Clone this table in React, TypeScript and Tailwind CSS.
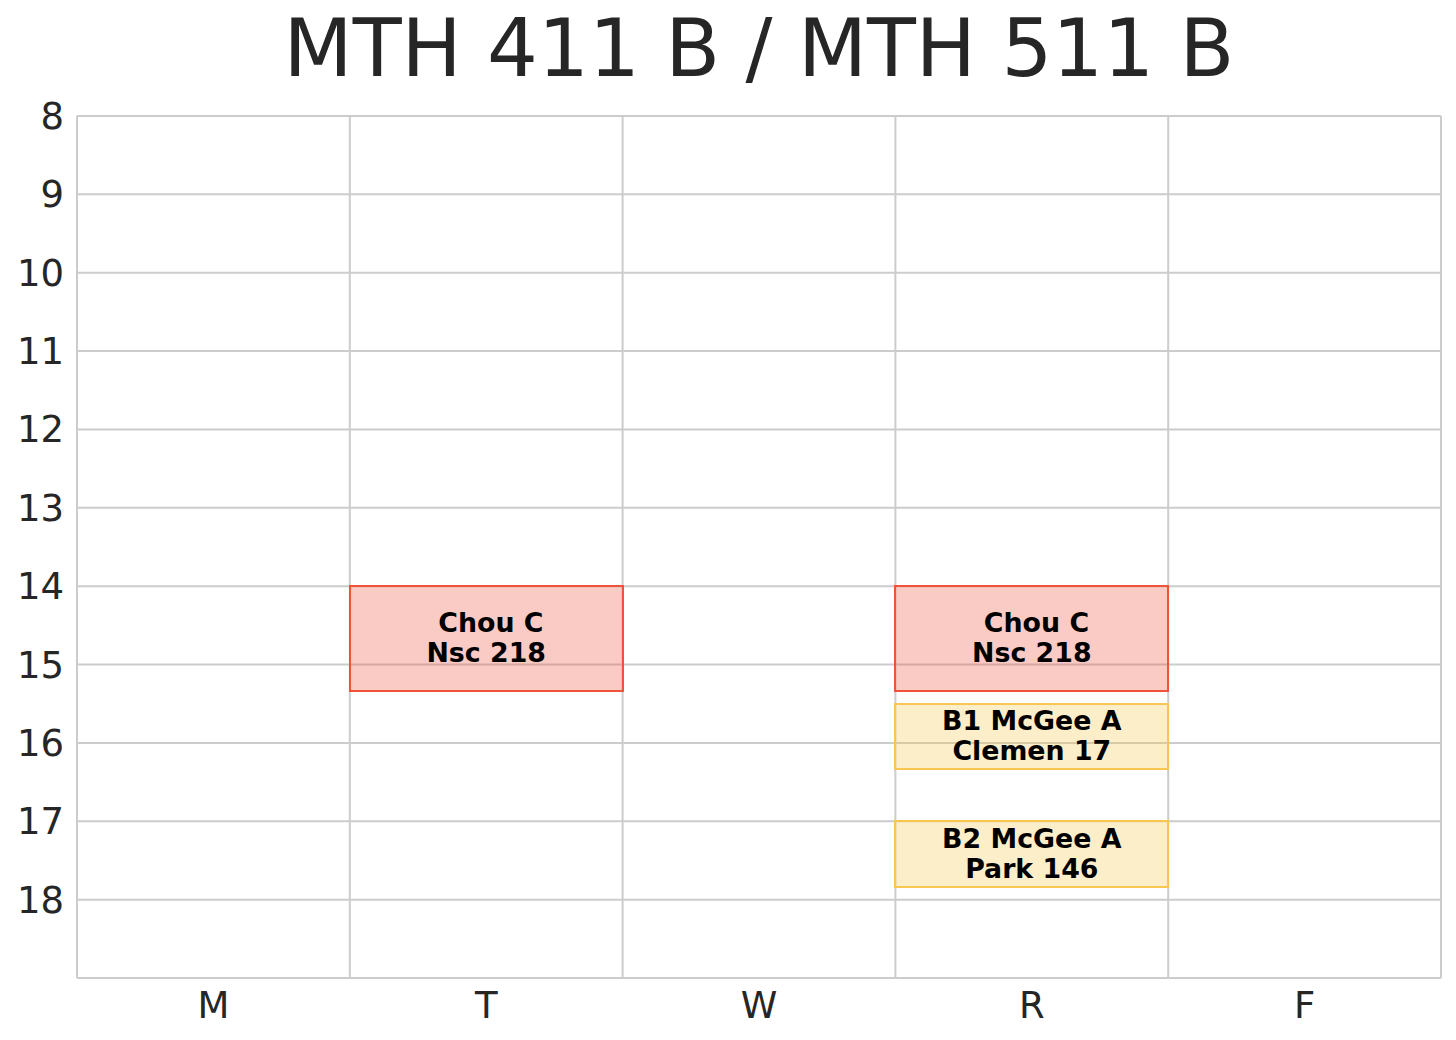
import React from "react";

const COL_W = 272.8;
const ROW_H = 78.3636;
const PLOT_W = 1364;
const PLOT_H = 862;

type Ev = { day: number; start: number; end: number; lines: string[]; kind: "red" | "yellow" };

const events: Ev[] = [
  { day: 1, start: 14, end: 15 + 20 / 60, lines: [" Chou C", "Nsc 218"], kind: "red" },
  { day: 3, start: 14, end: 15 + 20 / 60, lines: [" Chou C", "Nsc 218"], kind: "red" },
  { day: 3, start: 15.5, end: 16 + 20 / 60, lines: ["B1 McGee A", "Clemen 17"], kind: "yellow" },
  { day: 3, start: 17, end: 17 + 50 / 60, lines: ["B2 McGee A", "Park 146"], kind: "yellow" },
];

const hours = [8, 9, 10, 11, 12, 13, 14, 15, 16, 17, 18];
const days = ["M", "T", "W", "R", "F"];

export default function App() {
  return (
    <div
      className="w-[1456px] h-[1040px] bg-white text-[#262626] overflow-hidden"
      style={{ fontFamily: '"DejaVu Sans", "Liberation Sans", sans-serif' }}
    >
      <div className="h-[116px] pl-[77px]">
        <div className="w-[1364px] text-center text-[80px] leading-none pt-[9px]">MTH 411 B / MTH 511 B</div>
      </div>
      <div className="flex">
        <div className="w-[77px] flex flex-col">
          {hours.map((h) => (
            <div key={h} className="h-[78.3636px] pr-[13px] text-right text-[37px] leading-[36px]">
              <span className="block -mt-[17px]">{h}</span>
            </div>
          ))}
        </div>
        <div className="relative w-[1364px] h-[862px]">
          <svg className="absolute inset-0 overflow-visible" width={PLOT_W} height={PLOT_H}>
            {Array.from({ length: 12 }).map((_, i) => (
              <line key={"h" + i} x1={0} x2={PLOT_W} y1={i * ROW_H} y2={i * ROW_H} stroke="#cccccc" strokeWidth={2} />
            ))}
            {Array.from({ length: 6 }).map((_, i) => (
              <line key={"v" + i} x1={i * COL_W} x2={i * COL_W} y1={0} y2={PLOT_H} stroke="#cccccc" strokeWidth={2} />
            ))}
          </svg>
          {events.map((e, idx) => (
            <div
              key={idx}
              className={
                "absolute flex flex-col items-center justify-center text-center text-black font-bold text-[26.8px] leading-[30px] border-2 " +
                (e.kind === "red"
                  ? "border-[#ef533a] bg-[rgba(239,83,58,0.3)]"
                  : "border-[#f9c74f] bg-[rgba(249,199,79,0.3)]")
              }
              style={{
                left: e.day * COL_W - 1,
                width: COL_W + 2,
                top: (e.start - 8) * ROW_H - 1,
                height: (e.end - e.start) * ROW_H + 2,
              }}
            >
              {e.lines.map((l, j) => (
                <div key={j} className="whitespace-pre">
                  {l}
                </div>
              ))}
            </div>
          ))}
        </div>
      </div>
      <div className="flex pl-[77px] mt-[9px]">
        {days.map((d) => (
          <div key={d} className="w-[272.8px] text-center text-[37px] leading-none">
            {d}
          </div>
        ))}
      </div>
    </div>
  );
}
